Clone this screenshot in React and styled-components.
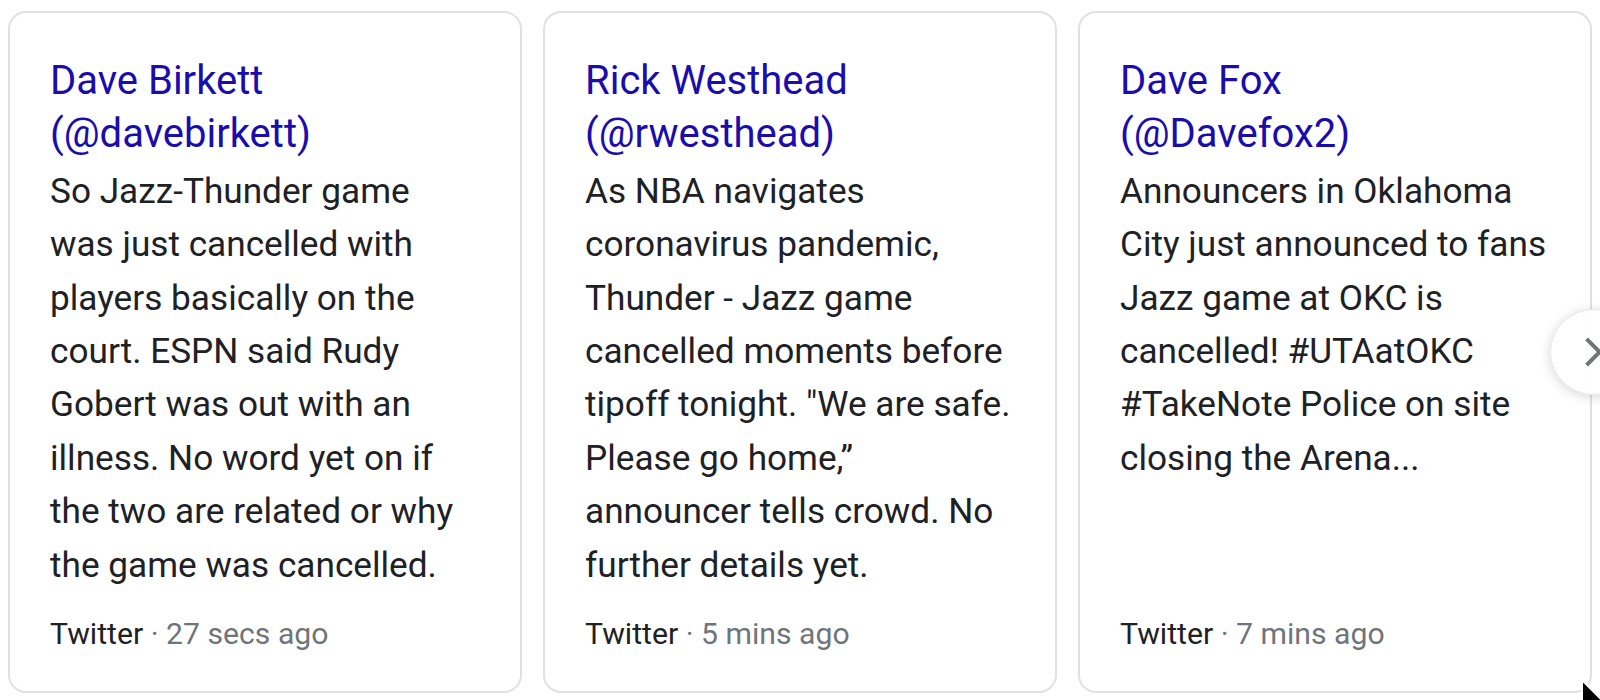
import React from "react";
import styled, { createGlobalStyle } from "styled-components";

const Global = createGlobalStyle`
  html, body {
    margin: 0;
    padding: 0;
    background: #ffffff;
    overflow: hidden;
  }
  body {
    font-family: Roboto, "Liberation Sans", Arial, sans-serif;
  }
`;

const Page = styled.div`
  padding: 11px 8px;
  width: 1600px;
  height: 700px;
  box-sizing: border-box;
  position: relative;
`;

const Carousel = styled.div`
  position: relative;
  display: flex;
  gap: 21px;
  align-items: stretch;
`;

const Card = styled.div`
  flex: 0 0 514px;
  box-sizing: border-box;
  border: 2px solid #dfe1e5;
  border-radius: 18px;
  padding: 41px 40px 37px 40px;
  display: flex;
  flex-direction: column;
  background: #fff;
`;

const Author = styled.a`
  display: block;
  color: #1a0dab;
  font-size: 40px;
  line-height: 53.4px;
  text-decoration: none;
`;

const AuthorLine = styled.span`
  display: block;
`;

const Body = styled.div`
  margin-top: 4px;
  color: #202124;
  font-size: 35.2px;
  line-height: 53.4px;
`;

const Footer = styled.div`
  margin-top: auto;
  padding-top: 22px;
  font-size: 30.2px;
  line-height: 40px;
  color: #202124;
  white-space: nowrap;
`;

const Time = styled.span`
  color: #70757a;
`;

const NextButton = styled.button`
  position: absolute;
  top: 50%;
  right: -44px;
  transform: translateY(-50%);
  width: 86px;
  height: 86px;
  border-radius: 50%;
  border: 1px solid #e6e6e6;
  background: rgba(255, 255, 255, 0.96);
  box-shadow: 0 2px 12px rgba(0, 0, 0, 0.16);
  padding: 0;
  display: flex;
  align-items: center;
  justify-content: center;
  cursor: pointer;
`;

const Cursor = styled.svg`
  position: absolute;
  left: 1581px;
  top: 679px;
  pointer-events: none;
`;

const tweets = [
  {
    name: "Dave Birkett",
    handle: "(@davebirkett)",
    text:
      "So Jazz-Thunder game was just cancelled with players basically on the court. ESPN said Rudy Gobert was out with an illness. No word yet on if the two are related or why the game was cancelled.",
    time: "27 secs ago",
  },
  {
    name: "Rick Westhead",
    handle: "(@rwesthead)",
    text:
      "As NBA navigates coronavirus pandemic, Thunder - Jazz game cancelled moments before tipoff tonight. \"We are safe. Please go home,\u201D announcer tells crowd. No further details yet.",
    time: "5 mins ago",
  },
  {
    name: "Dave Fox",
    handle: "(@Davefox2)",
    text:
      "Announcers in Oklahoma City just announced to fans Jazz game at OKC is cancelled! #UTAatOKC #TakeNote Police on site closing the Arena...",
    time: "7 mins ago",
  },
];

export default function App() {
  return (
    <>
      <Global />
      <Page>
        <Carousel>
          {tweets.map((t) => (
            <Card key={t.handle}>
              <Author href="#">
                <AuthorLine>{t.name}</AuthorLine>
                <AuthorLine>{t.handle}</AuthorLine>
              </Author>
              <Body>{t.text}</Body>
              <Footer>
                Twitter<Time> · {t.time}</Time>
              </Footer>
            </Card>
          ))}
          <NextButton aria-label="Next">
            <svg width="40" height="40" viewBox="0 0 24 24">
              <path
                d="M9 5l7 7-7 7"
                fill="none"
                stroke="#70757a"
                strokeWidth="2.4"
                strokeLinecap="square"
              />
            </svg>
          </NextButton>
        </Carousel>
        <Cursor width="26" height="38" viewBox="0 0 26 38">
          <path
            d="M1 1 L1 30 L8 23.5 L13 35 L17.5 33 L12.5 22 L22 22 Z"
            fill="#000"
            stroke="#fff"
            strokeWidth="2"
            strokeLinejoin="round"
          />
        </Cursor>
      </Page>
    </>
  );
}
